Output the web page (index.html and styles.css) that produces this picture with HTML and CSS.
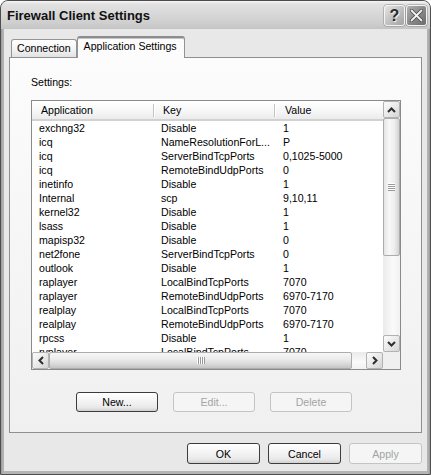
FILE: index.html
```html
<!DOCTYPE html>
<html>
<head>
<meta charset="utf-8">
<link rel="stylesheet" href="styles.css">
</head>
<body>
<div class="window">
  <div class="titlebar">
    <span class="title">Firewall Client Settings</span>
    <div class="caption-btns">
      <span class="cap help">?</span>
      <span class="cap close"><svg width="13" height="13" viewBox="0 0 13 13"><path d="M1.5 1.5 L11.5 11.5 M11.5 1.5 L1.5 11.5" fill="none" stroke="#4a4a4a" stroke-width="3.4" stroke-linecap="round"/><path d="M1.5 1.5 L11.5 11.5 M11.5 1.5 L1.5 11.5" fill="none" stroke="#f2f2f2" stroke-width="1.8" stroke-linecap="round"/></svg></span>
    </div>
  </div>
  <div class="client">
    <div class="tabs">
      <div class="tab">Connection</div>
      <div class="tab active">Application Settings</div>
    </div>
    <div class="panel">
      <div class="label">Settings:</div>
      <div class="listview">
        <div class="lv-content">
          <div class="lv-header"><span class="c1">Application</span><span class="c2">Key</span><span class="c3">Value</span></div>
          <div class="row"><span class="c1">exchng32</span><span class="c2">Disable</span><span class="c3">1</span></div>
          <div class="row"><span class="c1">icq</span><span class="c2">NameResolutionForL...</span><span class="c3">P</span></div>
          <div class="row"><span class="c1">icq</span><span class="c2">ServerBindTcpPorts</span><span class="c3">0,1025-5000</span></div>
          <div class="row"><span class="c1">icq</span><span class="c2">RemoteBindUdpPorts</span><span class="c3">0</span></div>
          <div class="row"><span class="c1">inetinfo</span><span class="c2">Disable</span><span class="c3">1</span></div>
          <div class="row"><span class="c1">Internal</span><span class="c2">scp</span><span class="c3">9,10,11</span></div>
          <div class="row"><span class="c1">kernel32</span><span class="c2">Disable</span><span class="c3">1</span></div>
          <div class="row"><span class="c1">lsass</span><span class="c2">Disable</span><span class="c3">1</span></div>
          <div class="row"><span class="c1">mapisp32</span><span class="c2">Disable</span><span class="c3">0</span></div>
          <div class="row"><span class="c1">net2fone</span><span class="c2">ServerBindTcpPorts</span><span class="c3">0</span></div>
          <div class="row"><span class="c1">outlook</span><span class="c2">Disable</span><span class="c3">1</span></div>
          <div class="row"><span class="c1">raplayer</span><span class="c2">LocalBindTcpPorts</span><span class="c3">7070</span></div>
          <div class="row"><span class="c1">raplayer</span><span class="c2">RemoteBindUdpPorts</span><span class="c3">6970-7170</span></div>
          <div class="row"><span class="c1">realplay</span><span class="c2">LocalBindTcpPorts</span><span class="c3">7070</span></div>
          <div class="row"><span class="c1">realplay</span><span class="c2">RemoteBindUdpPorts</span><span class="c3">6970-7170</span></div>
          <div class="row"><span class="c1">rpcss</span><span class="c2">Disable</span><span class="c3">1</span></div>
          <div class="row"><span class="c1">rvplayer</span><span class="c2">LocalBindTcpPorts</span><span class="c3">7070</span></div>
        </div>
        <div class="vscroll">
          <div class="sb-btn"><svg width="9" height="6" viewBox="0 0 9 6"><path d="M1 5 L4.5 1.5 L8 5" fill="none" stroke="#2e2e2e" stroke-width="2"/></svg></div>
          <div class="vthumb"><div class="grip-v"></div></div>
          <div class="spacer"></div>
          <div class="sb-btn"><svg width="9" height="6" viewBox="0 0 9 6"><path d="M1 1 L4.5 4.5 L8 1" fill="none" stroke="#2e2e2e" stroke-width="2"/></svg></div>
        </div>
        <div class="hscroll">
          <div class="sb-btn"><svg width="6" height="9" viewBox="0 0 6 9"><path d="M5 1 L1.5 4.5 L5 8" fill="none" stroke="#2e2e2e" stroke-width="2"/></svg></div>
          <div class="hthumb"><div class="grip-h"></div></div>
          <div class="spacer"></div>
          <div class="sb-btn"><svg width="6" height="9" viewBox="0 0 6 9"><path d="M1 1 L4.5 4.5 L1 8" fill="none" stroke="#2e2e2e" stroke-width="2"/></svg></div>
        </div>
        <div class="corner"></div>
      </div>
      <div class="btn-row">
        <div class="btn">New...</div>
        <div class="btn disabled">Edit...</div>
        <div class="btn disabled">Delete</div>
      </div>
    </div>
    <div class="dlg-btns">
      <div class="btn">OK</div>
      <div class="btn">Cancel</div>
      <div class="btn disabled">Apply</div>
    </div>
  </div>
</div>
</body>
</html>
```

FILE: styles.css
```css
html, body {
  margin: 0;
  padding: 0;
  background: #ffffff;
}
body {
  font-family: "Liberation Sans", Arial, sans-serif;
  font-size: 10.6px;
  color: #000;
}
.window {
  width: 431px;
  height: 475px;
  box-sizing: border-box;
  border: 1px solid #4e4e4e;
  border-radius: 8px 8px 0 0;
  background: linear-gradient(90deg, #9a9a9a, #b4b4b4 2px, #b4b4b4 calc(100% - 2px), #9a9a9a);
  overflow: hidden;
  display: flex;
  flex-direction: column;
}
.titlebar {
  height: 28px;
  flex: none;
  display: flex;
  align-items: center;
  justify-content: space-between;
  padding: 0 3px 0 6px;
  background: linear-gradient(#f6f6f6 0, #e2e2e2 3px, #d8d8d8 45%, #cecece 80%, #c4c4c4 100%);
}
.title {
  font-weight: bold;
  font-size: 13px;
  color: #111;
  padding-top: 1px;
}
.caption-btns {
  display: flex;
  gap: 1px;
}
.cap {
  width: 21px;
  height: 21px;
  box-sizing: border-box;
  border: 1px solid #f4f4f4;
  border-radius: 3px;
  display: flex;
  align-items: center;
  justify-content: center;
  box-shadow: 0 0 0 0.5px #8a8a8a;
}
.help {
  background: linear-gradient(135deg, #e4e4e4, #c2c2c2 50%, #a2a2a2);
  font-weight: bold;
  font-size: 16px;
  color: #2a2a2a;
  text-shadow: 1px 1px 0 #f0f0f0;
  line-height: 19px;
}
.close {
  background: linear-gradient(135deg, #b2b2b2, #8a8a8a 50%, #6c6c6c);
}
.client {
  flex: 1;
  margin: 0 3px 3px;
  background: #e8e8e8;
  padding: 7px 5px 7px;
  display: flex;
  flex-direction: column;
}
.tabs {
  display: flex;
  align-items: flex-end;
  height: 22px;
  margin-bottom: -1px;
  padding-left: 2px;
  position: relative;
  z-index: 1;
}
.tab {
  height: 18px;
  margin-bottom: 1px;
  box-sizing: border-box;
  border: 1px solid #949494;
  border-bottom: none;
  border-radius: 3px 3px 0 0;
  padding: 0 5px;
  line-height: 17px;
  background: linear-gradient(#ffffff, #f3f3f3 55%, #e2e2e2);
}
.tab.active {
  height: 22px;
  margin-bottom: 0;
  padding: 0 7px 0 6px;
  border-top: 2px solid #8c8c8c;
  background: #fcfcfc;
  box-shadow: inset 0 1px 0 #c4c4c4;
}
.panel {
  height: 376px;
  box-sizing: border-box;
  border: 1px solid #8f8f8f;
  background: linear-gradient(#fcfcfc, #f0f0f0);
  padding: 18px 20px 0 21px;
  display: flex;
  flex-direction: column;
}
.label {
  line-height: 13px;
  margin-bottom: 11px;
}
.listview {
  width: 370px;
  height: 270px;
  box-sizing: border-box;
  border: 1px solid #8a8a8a;
  display: grid;
  grid-template-columns: 351px 17px;
  grid-template-rows: 251px 17px;
  background: #ffffff;
}
.lv-content {
  grid-column: 1;
  grid-row: 1;
  overflow: hidden;
}
.lv-header {
  display: grid;
  grid-template-columns: 121px 121px 1fr;
  height: 20px;
  box-sizing: border-box;
  border-bottom: 2px solid #d2d2d2;
  background: linear-gradient(#ffffff, #f6f6f6 60%, #ebebeb);
  line-height: 18px;
  white-space: nowrap;
}
.lv-header .c1 { padding-left: 9px; }
.lv-header .c2, .lv-header .c3 {
  background:
    linear-gradient(#c4c4c4, #c4c4c4) 0 3px / 1px 13px no-repeat,
    linear-gradient(#ffffff, #ffffff) 1px 3px / 1px 13px no-repeat;
}
.lv-header .c2 { padding-left: 10px; }
.lv-header .c3 { padding-left: 11px; }
.row {
  display: grid;
  grid-template-columns: 121px 121px 1fr;
  height: 14px;
  line-height: 14px;
  white-space: nowrap;
}
.row .c1 { padding-left: 7px; }
.row .c2 { padding-left: 8px; }
.row .c3 { padding-left: 9px; }
.vscroll {
  grid-column: 2;
  grid-row: 1;
  display: flex;
  flex-direction: column;
  background: linear-gradient(90deg, #ebebeb, #fafafa 60%, #f1f1f1);
}
.hscroll {
  grid-column: 1;
  grid-row: 2;
  display: flex;
  background: linear-gradient(#ebebeb, #fafafa 60%, #f1f1f1);
}
.corner {
  grid-column: 2;
  grid-row: 2;
  background: #efefef;
}
.spacer {
  flex: 1;
}
.sb-btn {
  width: 17px;
  height: 17px;
  flex: none;
  box-sizing: border-box;
  border: 1px solid #b2b2b2;
  border-radius: 2px;
  background: linear-gradient(135deg, #fcfcfc, #e6e6e6 60%, #d4d4d4);
  display: flex;
  align-items: center;
  justify-content: center;
}
.vthumb {
  height: 138px;
  flex: none;
  box-sizing: border-box;
  border: 1px solid #acacac;
  border-radius: 2px;
  background: linear-gradient(90deg, #e4e4e4, #f8f8f8 35%, #ededed 70%, #d2d2d2);
  display: flex;
  align-items: center;
  justify-content: center;
}
.hthumb {
  width: 303px;
  flex: none;
  box-sizing: border-box;
  border: 1px solid #acacac;
  border-radius: 2px;
  background: linear-gradient(#f6f6f6, #ececec 40%, #d8d8d8 75%, #c4c4c4);
  display: flex;
  align-items: center;
  justify-content: center;
}
.grip-v {
  width: 7px;
  height: 8px;
  background: repeating-linear-gradient(#ffffff 0 1px, #9a9a9a 1px 2px);
}
.grip-h {
  width: 8px;
  height: 7px;
  background: repeating-linear-gradient(90deg, #ffffff 0 1px, #9a9a9a 1px 2px);
}
.btn-row {
  margin-top: 22px;
  margin-left: 45px;
  display: flex;
  gap: 15px;
}
.btn {
  width: 82px;
  height: 20px;
  box-sizing: border-box;
  border: 1px solid #3c3c3c;
  border-radius: 3px;
  background: linear-gradient(#ffffff, #f4f4f4 45%, #e9e9e9 80%, #d0d0d0);
  display: flex;
  align-items: center;
  justify-content: center;
}
.btn.disabled {
  border-color: #c4c4c4;
  background: #f5f5f5;
  color: #a4a4a4;
}
.dlg-btns {
  margin-top: 10px;
  display: flex;
  justify-content: flex-end;
  gap: 8px;
}
.dlg-btns .btn {
  width: 73px;
  height: 21px;
}
```
